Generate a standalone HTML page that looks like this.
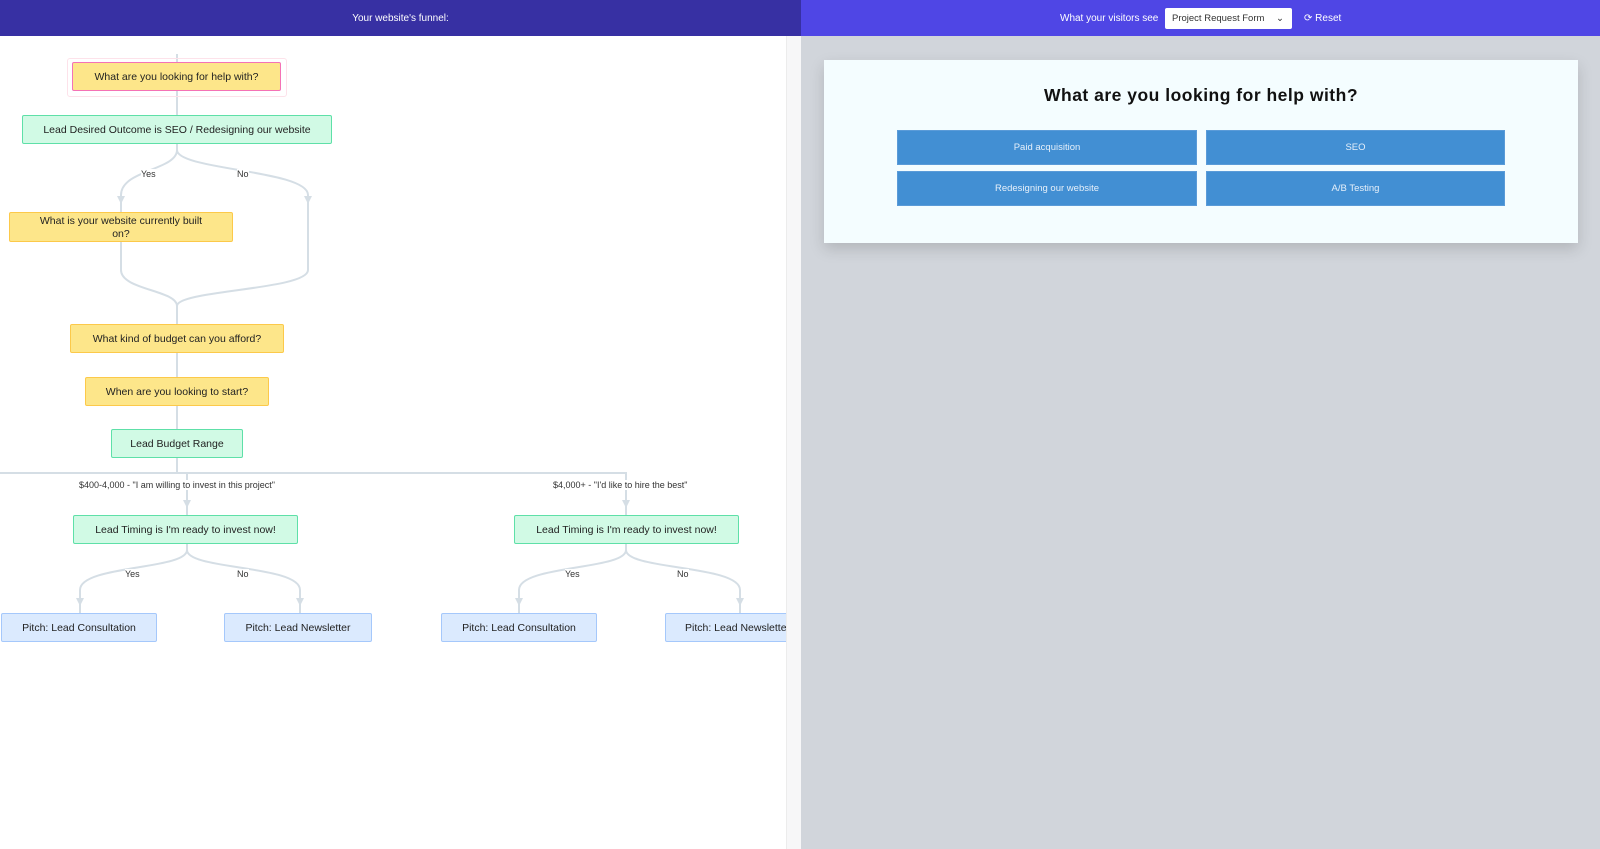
<!DOCTYPE html>
<html><head><meta charset="utf-8"><style>
*{margin:0;padding:0;box-sizing:border-box}
body{width:1600px;height:849px;overflow:hidden;font-family:"Liberation Sans",sans-serif;background:#fff;position:relative}
.hl{position:absolute;left:0;top:0;width:801px;height:36px;background:#3730a3;color:#fff;font-size:10px;text-align:center;line-height:38px}
.hr{position:absolute;left:801px;top:0;width:799px;height:36px;background:#4f46e5;color:#fff;font-size:10px}
.left{position:absolute;left:0;top:36px;width:786px;height:813px;background:#fff;overflow:hidden}
.strip{position:absolute;left:786px;top:36px;width:15px;height:813px;background:#f7f7f8;border-left:1px solid #ececec}
.right{position:absolute;left:801px;top:36px;width:799px;height:813px;background:#d1d5db}
.n{position:absolute;font-size:10.5px;color:#222;display:flex;align-items:center;justify-content:center;text-align:center;border-radius:2px;line-height:13px;padding-top:2px}
.y{background:#fde68a;border:1px solid #fcc94a}
.g{background:#d1fae5;border:1px solid #5ee0a8}
.b{background:#dbeafe;border:1px solid #a5c8fb}
.lb{position:absolute;font-size:9px;color:#333;background:#fff;white-space:nowrap}
.card{position:absolute;left:824px;top:60px;width:754px;height:183px;background:#f4fdff;box-shadow:0 6px 14px rgba(0,0,0,.15)}
.card h1{position:absolute;top:25px;width:100%;text-align:center;font-size:17.5px;font-weight:bold;color:#111;letter-spacing:.5px}
.btn{position:absolute;background:#428fd3;color:#e6f0fa;font-size:9.5px;display:flex;align-items:center;justify-content:center;border:1px solid #5a9bd8}
</style></head><body>
<div class="hl">Your website's funnel:</div>
<div class="hr">
<span style="position:absolute;left:259px;top:13px">What your visitors see</span>
<div style="position:absolute;left:364px;top:8px;width:127px;height:21px;background:#fff;border-radius:2px;color:#333;font-size:9.5px;line-height:22px;padding-left:7px">Project Request Form <span style="position:absolute;right:8px;top:0">&#8964;</span></div>
<span style="position:absolute;left:503px;top:13px">&#10227; Reset</span>
</div>
<div class="left">
<svg width="786" height="813" style="position:absolute;left:0;top:0" fill="none" stroke="#d5dee5" stroke-width="2">
<g transform="translate(0,-36)">
<path d="M177 54V115M177 144V150C177 170 121 170 121 195V212M177 150C177 170 308 170 308 195V270C308 290 177 290 177 306V324M121 242V270C121 290 177 290 177 306"/>
<path d="M177 353V377M177 406V429M177 458V473M0 473H626V515M187 473V515"/>
<path d="M187 544V550C187 570 80 565 80 590V613M187 550C187 570 300 565 300 590V613M626 544V550C626 570 519 565 519 590V613M626 550C626 570 740 565 740 590V613"/>
<g fill="#d5dee5" stroke="none">
<path d="M117 196h8l-4 8z M304 196h8l-4 8z M183 500h8l-4 8z M622 500h8l-4 8z M76 598h8l-4 8z M296 598h8l-4 8z M515 598h8l-4 8z M736 598h8l-4 8z"/>
</g></g></svg>
<div style="position:absolute;left:67px;top:22px;width:220px;height:39px;border:1px solid #fde2ea;border-radius:3px"></div>
<div class="n y" style="left:72px;top:26px;width:209px;height:29px;border-color:#f472b6">What are you looking for help with?</div>
<div class="n g" style="left:22px;top:79px;width:310px;height:29px">Lead Desired Outcome is SEO / Redesigning our website</div>
<span class="lb" style="left:141px;top:133px">Yes</span><span class="lb" style="left:237px;top:133px">No</span>
<div class="n y" style="left:9px;top:176px;width:224px;height:30px">What is your website currently built<br>on?</div>
<div class="n y" style="left:70px;top:288px;width:214px;height:29px">What kind of budget can you afford?</div>
<div class="n y" style="left:85px;top:341px;width:184px;height:29px">When are you looking to start?</div>
<div class="n g" style="left:111px;top:393px;width:132px;height:29px">Lead Budget Range</div>
<span class="lb" style="left:79px;top:444px">$400-4,000 - "I am willing to invest in this project"</span>
<span class="lb" style="left:553px;top:444px">$4,000+ - "I'd like to hire the best"</span>
<div class="n g" style="left:73px;top:479px;width:225px;height:29px">Lead Timing is I'm ready to invest now!</div>
<div class="n g" style="left:514px;top:479px;width:225px;height:29px">Lead Timing is I'm ready to invest now!</div>
<span class="lb" style="left:125px;top:533px">Yes</span><span class="lb" style="left:237px;top:533px">No</span>
<span class="lb" style="left:565px;top:533px">Yes</span><span class="lb" style="left:677px;top:533px">No</span>
<div class="n b" style="left:1px;top:577px;width:156px;height:29px">Pitch: Lead Consultation</div>
<div class="n b" style="left:224px;top:577px;width:148px;height:29px">Pitch: Lead Newsletter</div>
<div class="n b" style="left:441px;top:577px;width:156px;height:29px">Pitch: Lead Consultation</div>
<div class="n b" style="left:665px;top:577px;width:148px;height:29px;justify-content:flex-start;padding-left:19px;white-space:nowrap">Pitch: Lead Newsletter</div>
</div>
<div class="strip"></div>
<div class="right"></div>
<div class="card"><h1>What are you looking for help with?</h1></div>
<div class="btn" style="left:897px;top:130px;width:300px;height:35px">Paid acquisition</div>
<div class="btn" style="left:1206px;top:130px;width:299px;height:35px">SEO</div>
<div class="btn" style="left:897px;top:171px;width:300px;height:35px">Redesigning our website</div>
<div class="btn" style="left:1206px;top:171px;width:299px;height:35px">A/B Testing</div>
</body></html>
